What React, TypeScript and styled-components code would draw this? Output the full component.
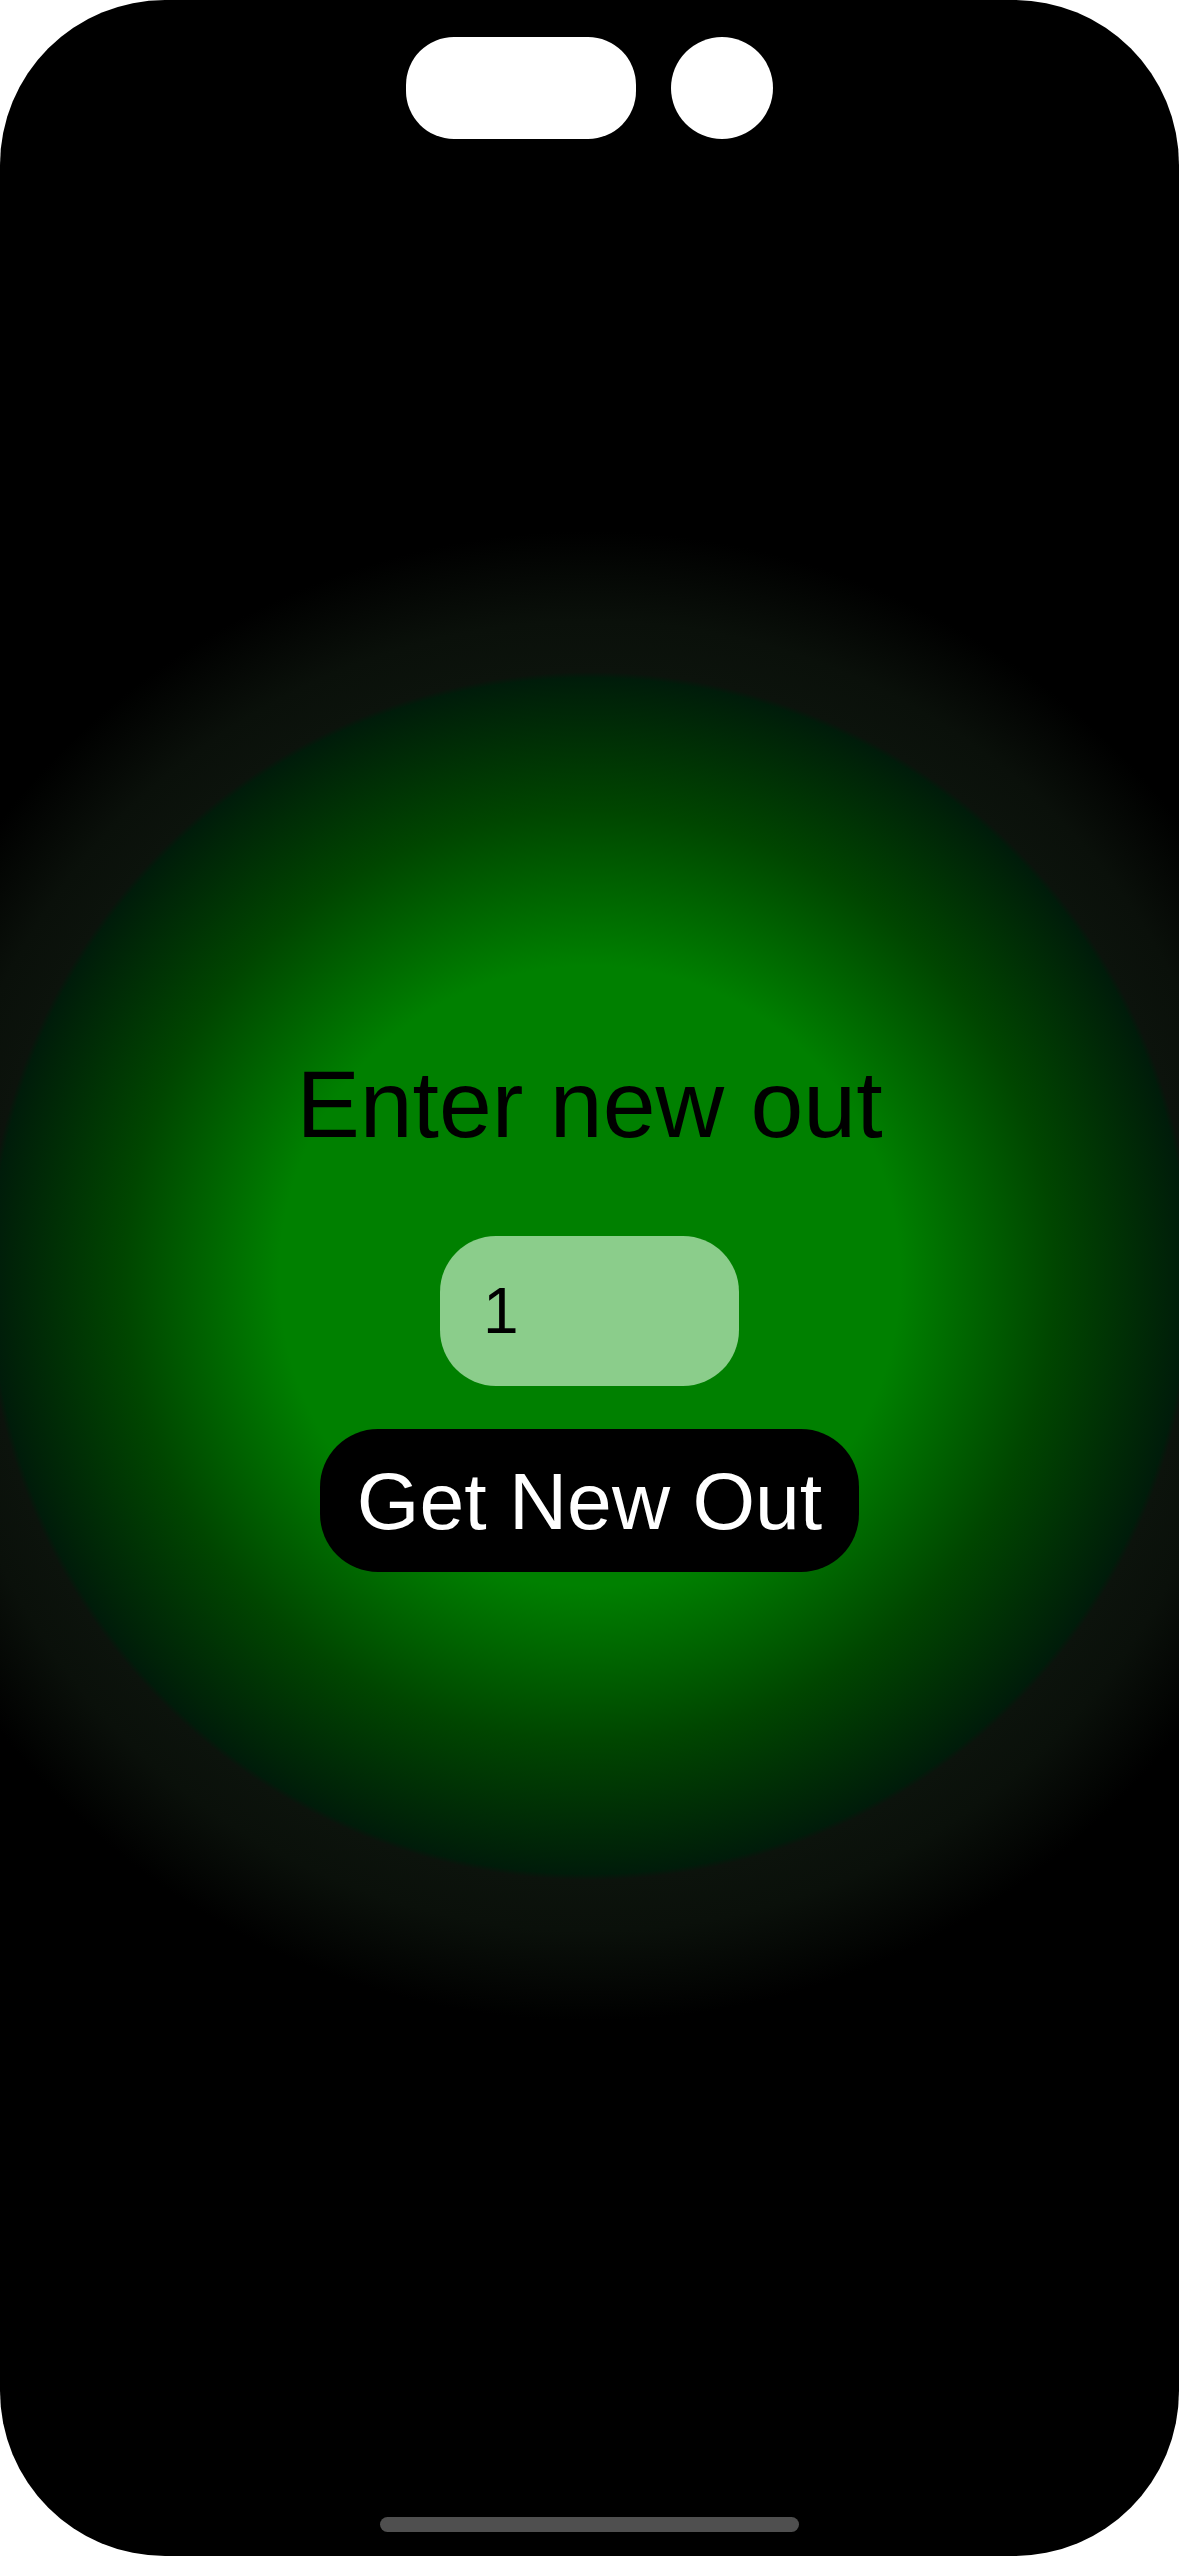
import React, { useState } from "react";
import styled, { createGlobalStyle } from "styled-components";

const GlobalStyle = createGlobalStyle`
  html, body {
    margin: 0;
    padding: 0;
    background: #ffffff;
  }
  body {
    font-family: "Liberation Sans", Arial, Helvetica, sans-serif;
  }
  * { box-sizing: border-box; }
`;

const Phone = styled.div`
  width: 1179px;
  height: 2556px;
  border-radius: 165px;
  overflow: hidden;
  display: flex;
  flex-direction: column;
  background: radial-gradient(
    circle at 50% 1276px,
    #008000 0px,
    #008000 310px,
    #004600 465px,
    #002208 580px,
    #001c0a 598px,
    #0c130c 604px,
    #0a100a 655px,
    #000000 745px
  );
`;

const IslandRow = styled.div`
  display: flex;
  justify-content: center;
  align-items: center;
  gap: 35px;
  padding-top: 37px;
`;

const Pill = styled.div`
  width: 230px;
  height: 102px;
  border-radius: 48px;
  background: #ffffff;
`;

const Lens = styled.div`
  width: 102px;
  height: 102px;
  border-radius: 50%;
  background: #ffffff;
`;

const Main = styled.main`
  display: flex;
  flex-direction: column;
  align-items: center;
  padding-top: 918px;
`;

const Title = styled.h1`
  margin: 0;
  font-family: "Liberation Sans", Arial, Helvetica, sans-serif;
  font-weight: 400;
  font-size: 95px;
  line-height: 95px;
  color: #000000;
  white-space: nowrap;
`;

const Field = styled.input`
  margin-top: 84px;
  width: 299px;
  height: 150px;
  border: none;
  outline: none;
  border-radius: 56px;
  background: #8bcd8b;
  padding: 0 20px 0 43px;
  font-family: "Liberation Sans", Arial, Helvetica, sans-serif;
  font-size: 64px;
  line-height: 64px;
  color: #000000;
`;

const ActionButton = styled.button`
  margin-top: 43px;
  width: 539px;
  height: 143px;
  border: none;
  border-radius: 58px;
  background: #000000;
  color: #ffffff;
  font-family: "Liberation Sans", Arial, Helvetica, sans-serif;
  font-size: 80.5px;
  line-height: 82px;
  padding: 0;
  cursor: pointer;
  display: flex;
  align-items: center;
  justify-content: center;
`;

const HomeIndicator = styled.div`
  margin: auto auto 24px;
  width: 419px;
  height: 15px;
  border-radius: 8px;
  background: #4f4f4f;
`;

export default function App() {
  const [value, setValue] = useState("1");
  return (
    <>
      <GlobalStyle />
      <Phone>
        <IslandRow>
          <Pill />
          <Lens />
        </IslandRow>
        <Main>
          <Title>Enter new out</Title>
          <Field value={value} onChange={(e) => setValue(e.target.value)} />
          <ActionButton>Get New Out</ActionButton>
        </Main>
        <HomeIndicator />
      </Phone>
    </>
  );
}
